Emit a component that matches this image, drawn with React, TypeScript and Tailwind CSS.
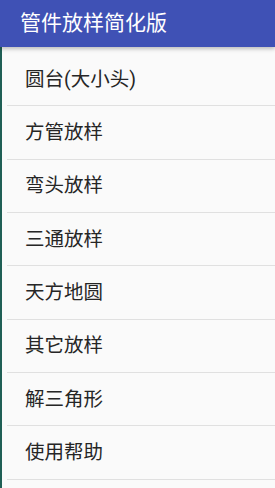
const items = ['圆台(大小头)', '方管放样', '弯头放样', '三通放样', '天方地圆', '其它放样', '解三角形', '使用帮助'];

export default function App() {
  return (
    <div
      className="w-[275px] h-[488px] overflow-hidden bg-[#fafafa] flex flex-col"
      style={{ fontFamily: 'Roboto, "Noto Sans CJK SC", sans-serif' }}
    >
      <header className="h-[47px] shrink-0 bg-[#3f51b5] flex items-center px-[20px] text-white text-[21px] shadow-[0_2px_4px_rgba(0,0,0,0.25)] z-10">
        管件放样简化版
      </header>
      <div className="flex-1 flex border-l-2 border-[#1f5f55]">
        <ul className="flex-1 pt-[6px] pl-[5px]">
          {items.map((t) => (
            <li
              key={t}
              className="h-[53.33px] flex items-center pl-[18px] text-[19.5px] text-[#262626] border-b border-[#e0e0e0]"
            >
              {t}
            </li>
          ))}
        </ul>
      </div>
    </div>
  );
}
